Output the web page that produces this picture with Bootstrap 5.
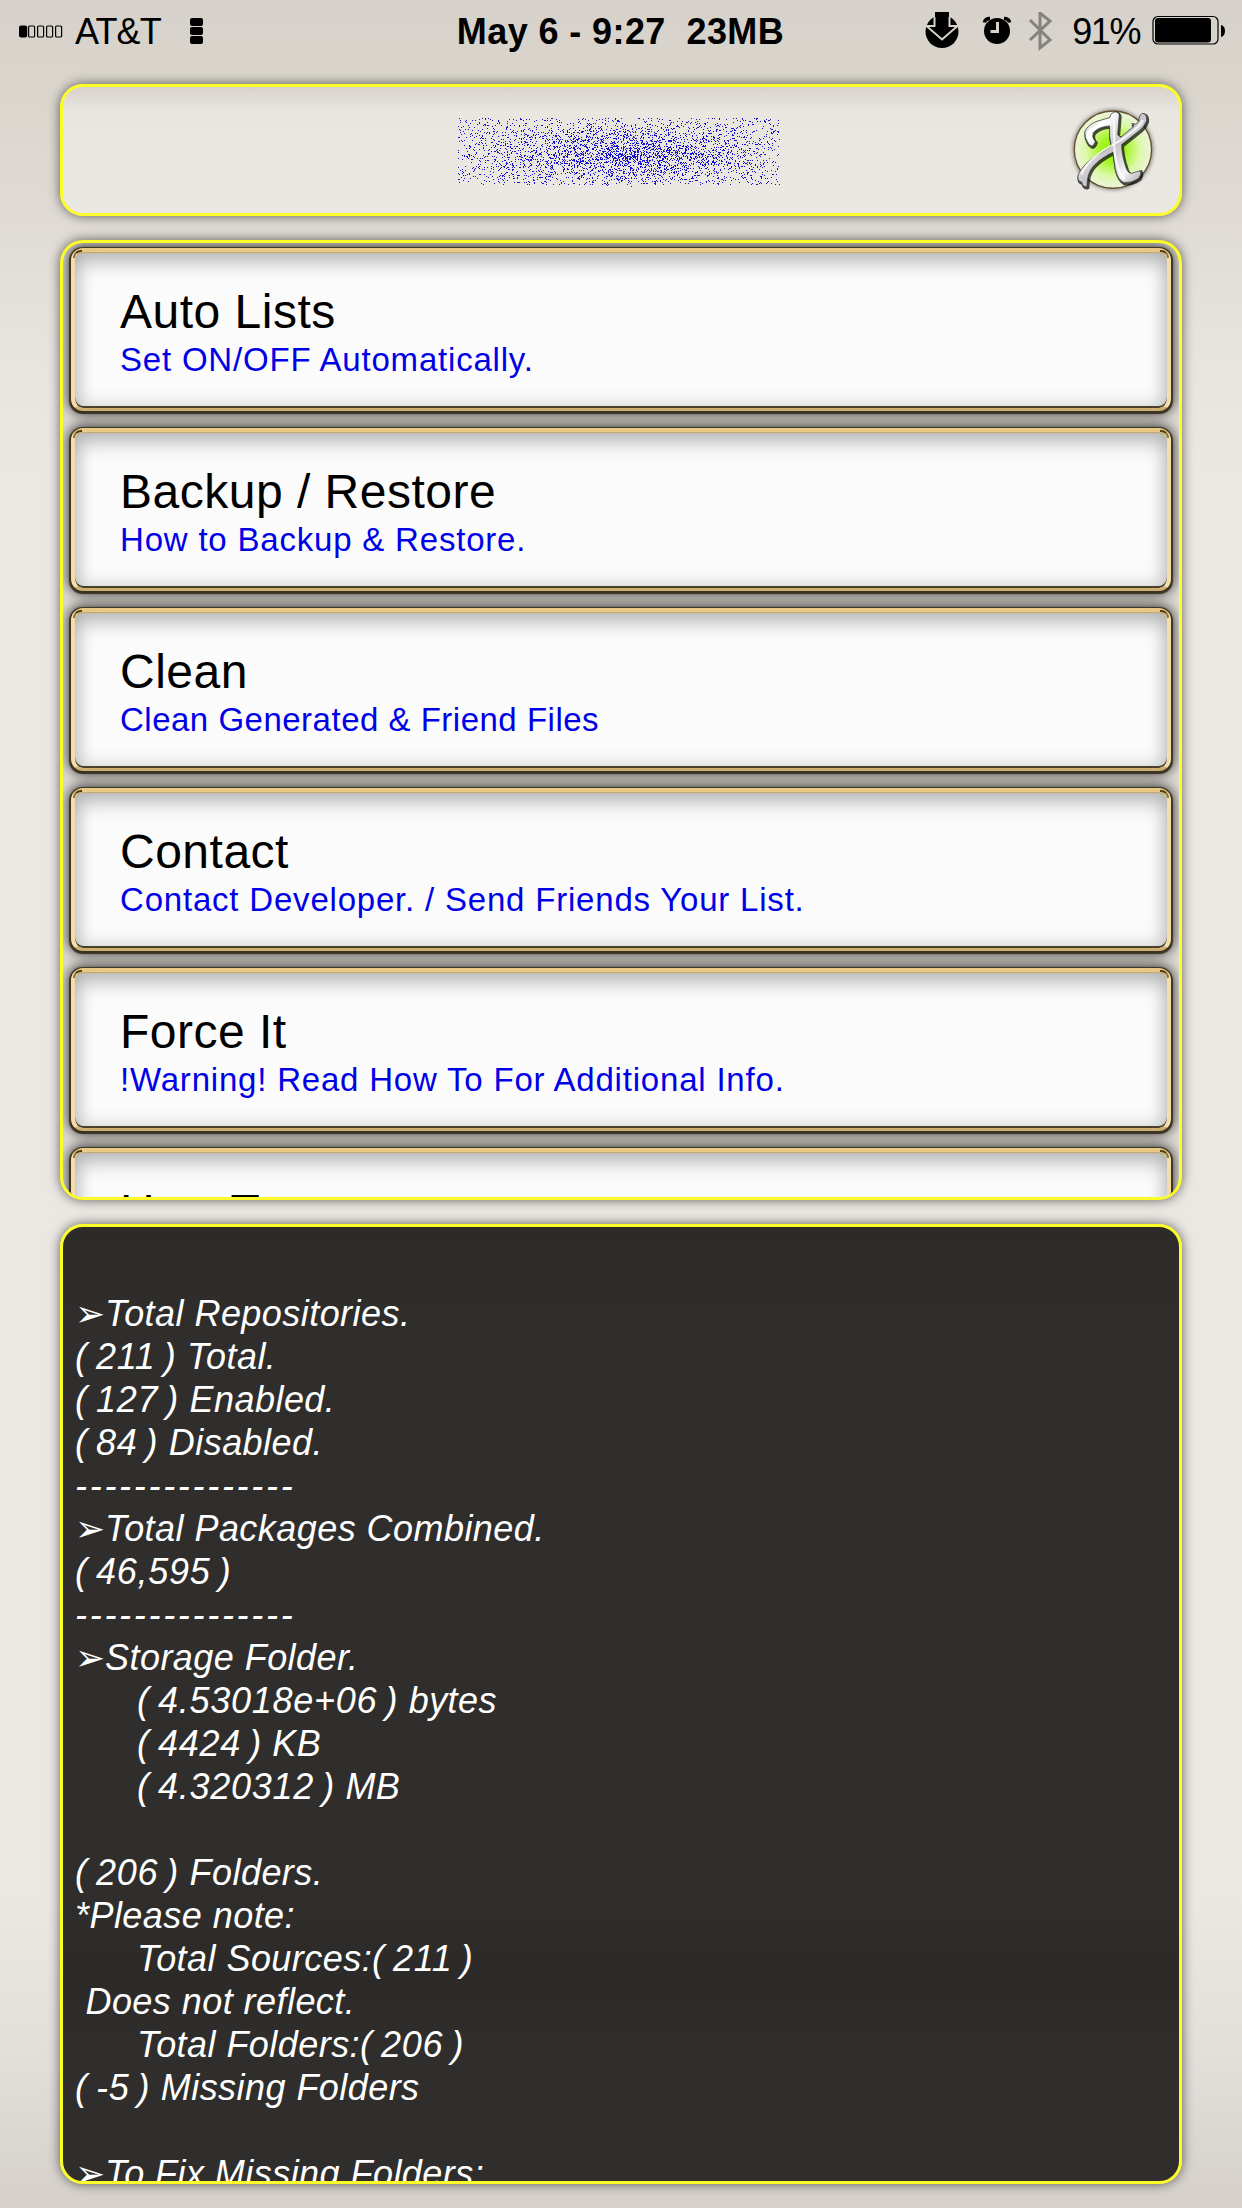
<!DOCTYPE html>
<html lang="en">
<head>
<meta charset="utf-8">
<title>Sources</title>
<link href="https://cdn.jsdelivr.net/npm/bootstrap@5.3.0/dist/css/bootstrap.min.css" rel="stylesheet">
<style>
body{width:1242px;height:2208px;overflow:hidden;font-family:"Liberation Sans",Arial,sans-serif;color:#000;background:linear-gradient(#d6d1ca 0,#d9d5cd 70px,#e0dcd5 230px,#e8e5e0 370px,#ebe8e3 470px,#ebe8e3 1900px,#e2deda 2060px,#d5d0ca 2208px)}
.statusbar{height:84px;padding:0 16px 0 19px;font-size:36px;line-height:40px}
.side{width:438px;padding-top:12px}
.carrier{letter-spacing:-.9px;margin-left:12px}
.battery-text{letter-spacing:-1.4px;margin:0 10px 0 17px}
.clock{letter-spacing:.4px;padding-top:12px;margin-left:-4px;white-space:pre}
.panel{border:3px solid #fcfc27;border-radius:23px;box-shadow:0 0 12px rgba(0,0,0,.6);margin:0 60px 24px;overflow:hidden;flex:none}
.head{height:132px;background:linear-gradient(#d6d2ca 0,#dfdbd4 10px,#e9e6e0 25px,#ebe8e3 100%)}
.menu{height:960px;padding:5px 8px 0;background:#e0ddd7}
.item{position:relative;height:163px;margin-bottom:17px;border:4px solid;border-bottom-width:3px;border-radius:12px;border-color:#e9c883 #f5ddaa #cdb071 #f5ddaa;padding:35px 0 0 45px;background:#fbfbfb;
box-shadow:0 1px 1px 1.5px #3c3423,0 0 13px 3px rgba(0,0,0,.72),inset 0 1px 1px #c5a76a,inset 0 -2px 0 #4a4029,inset 0 13px 18px rgba(0,0,0,.17),inset 0 0 18px 3px rgba(0,0,0,.17)}
.item::before,.item::after{content:"";position:absolute;top:-2px;width:9px;height:8px;border-top:2px solid #4d3d1b}
.item::before{left:-2px;border-left:2px solid #8d7238;border-radius:8px 0 0 0}
.item::after{right:-2px;border-right:2px solid #8d7238;border-radius:0 8px 0 0}
.title{font-size:48px;line-height:49px;letter-spacing:.5px}
.desc{font-size:33px;line-height:47px;color:#0000e6;letter-spacing:.8px}
.desc-tight{letter-spacing:.5px}
.log{height:960px;background:linear-gradient(#2c2b29,#2f2e2c 12%,#2f2e2c 70%,#2b2a28 79%,#2f2e2c 86%);color:#fff;font-size:36px;font-style:italic;line-height:43px;letter-spacing:.45px;padding:65px 0 0 12px;white-space:pre}
.ind{padding-left:62px}
.num{letter-spacing:.75px;word-spacing:-2.6px}
.dash{letter-spacing:2.7px}
.arrow{display:inline-block;width:30px;font-family:"DejaVu Sans";font-style:normal;font-size:36px;line-height:30px;letter-spacing:0}
</style>
</head>
<body class="d-flex flex-column">
<header class="statusbar d-flex justify-content-between align-items-start">
<div class="side d-flex align-items-start">
<svg width="44" height="40" viewBox="0 0 44 40" fill="none" stroke="#000" stroke-width="1.2"><rect x=".6" y="14" width="7" height="11" rx="1.5" fill="#000"/><rect x="9.6" y="14" width="6" height="11" rx="1"/><rect x="18.6" y="14" width="6" height="11" rx="1"/><rect x="27.6" y="14" width="6" height="11" rx="1"/><rect x="36.6" y="14" width="6" height="11" rx="1"/></svg>
<span class="carrier">AT&amp;T</span>
<svg class="ms-4" width="24" height="40"><rect x="5" y="6" width="13" height="8" rx="2"/><rect x="5" y="15" width="13" height="8" rx="2"/><rect x="5" y="24" width="13" height="8" rx="2"/></svg>
</div>
<div class="clock fw-bold">May 6 - 9:27  23MB</div>
<div class="side d-flex justify-content-end align-items-start">
<svg width="134" height="44" viewBox="921 12 134 44"><circle cx="942" cy="31.500" r="16.500"/><path d="M934.500 12h15v14h8L942 39.500 926.500 26h8z" stroke="#d7d3cb" stroke-width="2"/><path d="M935 12h14v5h-14z"/><circle cx="997" cy="31" r="13"/><path d="M984.500 22.500q.5-4 5.500-4M1004 18.500q5 0 5.500 4" stroke="#000" stroke-width="3.500" fill="none"/><path d="M997.500 22v9.500h-7" fill="none" stroke="#d7d3cb" stroke-width="3"/><path d="M1030 20l20 20-10 8V13l10 8-20 19" fill="none" stroke="#85827d" stroke-width="3"/></svg>
<span class="battery-text">91%</span>
<svg width="76" height="40" viewBox="1150 12 76 40"><rect x="1153" y="16.500" width="65" height="27.500" rx="5" fill="none" stroke="#000" stroke-width="1.200"/><rect x="1155" y="18" width="56" height="24.500" rx="3"/><path d="M1221 25q4 1 4 6t-4 6z"/></svg>
</div>
</header>
<section class="panel head">
<svg class="w-100 h-100 d-block" viewBox="63 87 1116 126">
<defs><radialGradient id="lime"><stop offset="0" stop-color="#8df000"/><stop offset=".35" stop-color="#a8f52a"/><stop offset=".7" stop-color="#dcf9a8"/><stop offset="1" stop-color="#edf3df"/></radialGradient>
<linearGradient id="chrome" x1="0" y1="0" x2="1" y2="1"><stop offset="0" stop-color="#9a9a9e"/><stop offset=".25" stop-color="#fff"/><stop offset=".5" stop-color="#c4c4c9"/><stop offset=".75" stop-color="#f4f4f6"/><stop offset="1" stop-color="#8c8c90"/></linearGradient>
<filter id="soft" x="-20%" y="-20%" width="140%" height="140%"><feGaussianBlur stdDeviation="6"/></filter>
<path id="emblem" d="M71 132Q57 112 60 94Q68 75 96 64L134 53Q140 34 153 36Q166 38 162 56L158 104L167 112L207 78L200 70Q213 78 222 62Q222 42 234 40Q247 43 245 62Q238 82 218 96L170 134Q170 165 184 205Q189 221 201 220L226 212Q231 222 222 235Q202 250 176 248Q158 238 151 207L144 157Q105 176 85 199Q66 220 66 259Q55 264 50 247Q35 243 40 223Q53 196 86 172Q112 158 139 139L134 108V78Q101 80 85 98Q79 111 91 125Q86 139 79 138Z"/></defs>
<path id="spray" fill="#1510cc"/>
<g transform="translate(1065 100) scale(.333)"><circle cx="144" cy="149" r="120" opacity=".5" filter="url(#soft)"/><circle cx="144" cy="149" r="116" fill="url(#lime)" stroke="#67522b" stroke-width="4"/><use href="#emblem" x="3" y="4" stroke="#111" stroke-width="9" opacity=".75"/><use href="#emblem" fill="url(#chrome)" stroke="#333" stroke-width="2"/><path d="M66 105Q74 79 140 66M147 62L148 140Q151 206 178 237M234 60Q223 84 156 128Q70 171 49 224" fill="none" stroke="#fff" stroke-width="6" opacity=".8"/></g>
</svg>
</section>
<main class="panel menu">
<div class="item"><div class="title">Auto Lists</div><div class="desc">Set ON/OFF Automatically.</div></div>
<div class="item"><div class="title">Backup / Restore</div><div class="desc">How to Backup &amp; Restore.</div></div>
<div class="item"><div class="title">Clean</div><div class="desc desc-tight">Clean Generated &amp; Friend Files</div></div>
<div class="item"><div class="title">Contact</div><div class="desc">Contact Developer. / Send Friends Your List.</div></div>
<div class="item"><div class="title">Force It</div><div class="desc">!Warning! Read How To For Additional Info.</div></div>
<div class="item"><div class="title">How To</div></div>
</main>
<section class="panel log"><div><span class="arrow">➢</span>Total Repositories.</div><div><span class="num">( 211 )</span> Total.</div><div><span class="num">( 127 )</span> Enabled.</div><div><span class="num">( 84 )</span> Disabled.</div><div class="dash">---------------</div><div><span class="arrow">➢</span>Total Packages Combined.</div><div><span class="num">( 46,595 )</span></div><div class="dash">---------------</div><div><span class="arrow">➢</span>Storage Folder.</div><div class="ind"><span class="num">( 4.53018e+06 )</span> bytes</div><div class="ind"><span class="num">( 4424 )</span> KB</div><div class="ind"><span class="num">( 4.320312 )</span> MB</div><div> </div><div><span class="num">( 206 )</span> Folders.</div><div>*Please note:</div><div class="ind">Total Sources:<span class="num">( 211 )</span></div><div> Does not reflect.</div><div class="ind">Total Folders:<span class="num">( 206 )</span></div><div><span class="num">( -5 )</span> Missing Folders</div><div> </div><div><span class="arrow">➢</span>To Fix Missing Folders:</div></section>
<script src="https://cdn.jsdelivr.net/npm/bootstrap@5.3.0/dist/js/bootstrap.bundle.min.js"></script>
<script>
// Scatter of single-pixel dots, denser towards the middle
let s=7,d='';const r=()=>(s=(s*16807)%2147483647)/2147483647;
for(let i=0;i<4000;i++){let x,y;if(i<1700){x=458+r()*322;y=118+r()*67}else{x=468+(r()+r())*156;y=121+(r()+r())*33}
d+=`M${x|0} ${y|0}h1v1h-1z`}
document.getElementById('spray').setAttribute('d',d);
</script>
</body>
</html>
